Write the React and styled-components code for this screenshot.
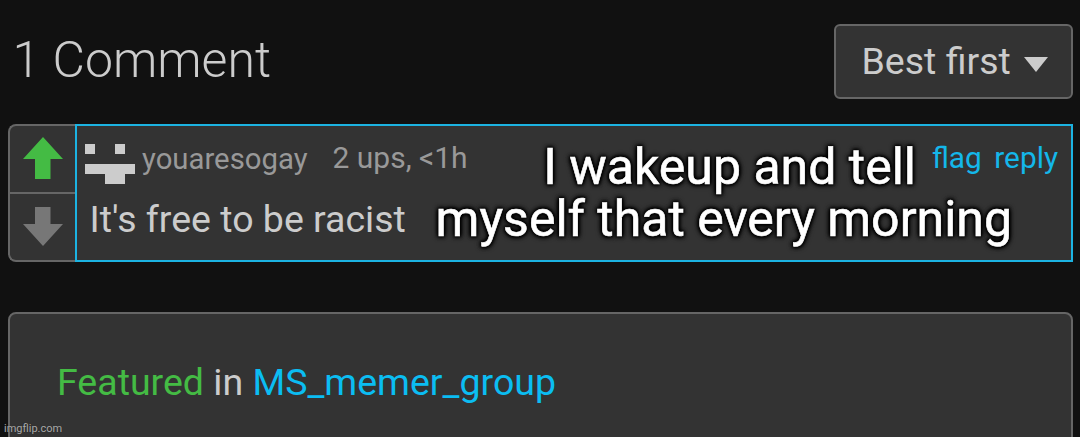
import React from 'react';
import styled, { createGlobalStyle } from 'styled-components';

function App() {
  return (
    <>
      <GlobalStyle />
      <Page>
        <Header>
          <Title>1 Comment</Title>
          <SortButton>
            Best first
            <Caret viewBox="0 0 24 15">
              <path d="M0 0H24L12 15Z" />
            </Caret>
          </SortButton>
        </Header>
        <Comment>
          <Votes>
            <Vote color="#44bb44">
              <Arrow viewBox="0 0 40 42">
                <path d="M20 0L40 22H27.500V42H12V22H0Z" />
              </Arrow>
            </Vote>
            <Vote color="#777">
              <Arrow viewBox="0 0 40 42">
                <path d="M20 40L40 18H27.500V1H12V18H0Z" />
              </Arrow>
            </Vote>
          </Votes>
          <Body>
            <Meta>
              <Avatar viewBox="0 0 50 40">
                <path d="M0 0H10V10H0ZM30 0H40V10H30ZM0 20H50V30H40V40H20V30H0Z" />
              </Avatar>
              <User>youaresogay</User>
              <Points>2 ups, &lt;1h</Points>
              <Actions>
                <Action>flag</Action>
                <Action>reply</Action>
              </Actions>
            </Meta>
            <Message>It's free to be racist</Message>
          </Body>
          <Caption>
            <CaptionLine $shift={12}>I wakeup and tell</CaptionLine>
            <CaptionLine>myself that every morning</CaptionLine>
          </Caption>
        </Comment>
        <Featured>
          <Green>Featured</Green> in <Blue>MS_memer_group</Blue>
        </Featured>
        <Watermark>imgflip.com</Watermark>
      </Page>
    </>
  );
}

export default App;

const GlobalStyle = createGlobalStyle`
  * {
    box-sizing: border-box;
  }
  body {
    margin: 0;
    background: #111;
    font-family: Roboto, sans-serif;
    overflow: hidden;
  }
`;

const Page = styled.div`
  position: relative;
  height: 437px;
  padding: 24px 7px 0 8px;
  overflow: hidden;
  color: #ccc;
  white-space: nowrap;
`;

const Header = styled.div`
  display: flex;
  justify-content: space-between;
  height: 75px;
`;

const Title = styled.h1`
  margin: 0;
  padding: 0 0 0 4.5px;
  font-size: 50px;
  font-weight: 300;
  line-height: 72px;
`;

const SortButton = styled.div`
  display: flex;
  align-items: center;
  justify-content: space-between;
  width: 239px;
  padding: 0 23px 2px 25.5px;
  border: 2px solid #666;
  border-radius: 6px;
  background: #333;
  font-size: 37.5px;
`;

const Caret = styled.svg`
  width: 24px;
  height: 15px;
  margin-top: 7px;
  fill: currentColor;
`;

const Comment = styled.div`
  position: relative;
  display: flex;
  height: 138px;
  margin-top: 25px;
`;

const Votes = styled.div`
  width: 67px;
  border: 2px solid #666;
  border-right: 0;
  border-radius: 8px 0 0 8px;
  background: #333;
`;

const Vote = styled.div`
  display: flex;
  justify-content: center;
  height: 66px;
  padding-top: 11px;
  color: ${({ color }) => color};
  & + & {
    height: 68px;
    padding-top: 12px;
    border-top: 2px solid #666;
  }
`;

const Arrow = styled.svg`
  width: 40px;
  height: 42px;
  fill: currentColor;
`;

const Body = styled.div`
  flex: 1;
  border: 2px solid #1cb3e2;
  background: #333;
`;

const Meta = styled.div`
  display: flex;
  height: 64px;
  padding: 18px 13px 0 8px;
  color: #999;
  font-size: 29.3px;
  line-height: 30px;
`;

const Avatar = styled.svg`
  width: 50px;
  height: 40px;
  fill: #ccc;
`;

const User = styled.span`
  margin-left: 7px;
`;

const Points = styled.span`
  margin: -1px 0 0 25px;
  font-size: 30px;
`;

const Actions = styled.div`
  display: flex;
  gap: 12.5px;
  margin: -1px 0 0 auto;
  color: #14b7ea;
  font-size: 29.8px;
`;

const Action = styled.a`
  cursor: pointer;
`;

const Message = styled.div`
  padding-left: 12.6px;
  font-size: 37.5px;
  line-height: 58px;
`;

const Caption = styled.div`
  position: absolute;
  top: 17px;
  left: 427.6px;
  width: 576px;
  color: #fff;
  font-size: 50px;
  line-height: 52px;
  text-align: center;
  -webkit-text-stroke: 0.6px #fff;
  text-shadow: 0 0 2px #000, 0 0 3px #000, 0 0 4px #000, 0 0 4px #000,
    0 0 5px #000, 0 0 6px #000;
`;

const CaptionLine = styled.div`
  margin-left: ${({ $shift }) => $shift || 0}px;
`;

const Featured = styled.div`
  height: 160px;
  margin-top: 50px;
  padding: 40px 47px;
  border: 2px solid #666;
  border-radius: 8px;
  background: #333;
  font-size: 37.5px;
  line-height: 56px;
`;

const Green = styled.span`
  color: #44bb44;
`;

const Blue = styled.span`
  color: #0bbdf2;
`;

const Watermark = styled.div`
  position: absolute;
  left: 4px;
  bottom: 2px;
  color: #aaa;
  font-size: 11px;
  text-shadow: 0 0 1px #222;
`;
